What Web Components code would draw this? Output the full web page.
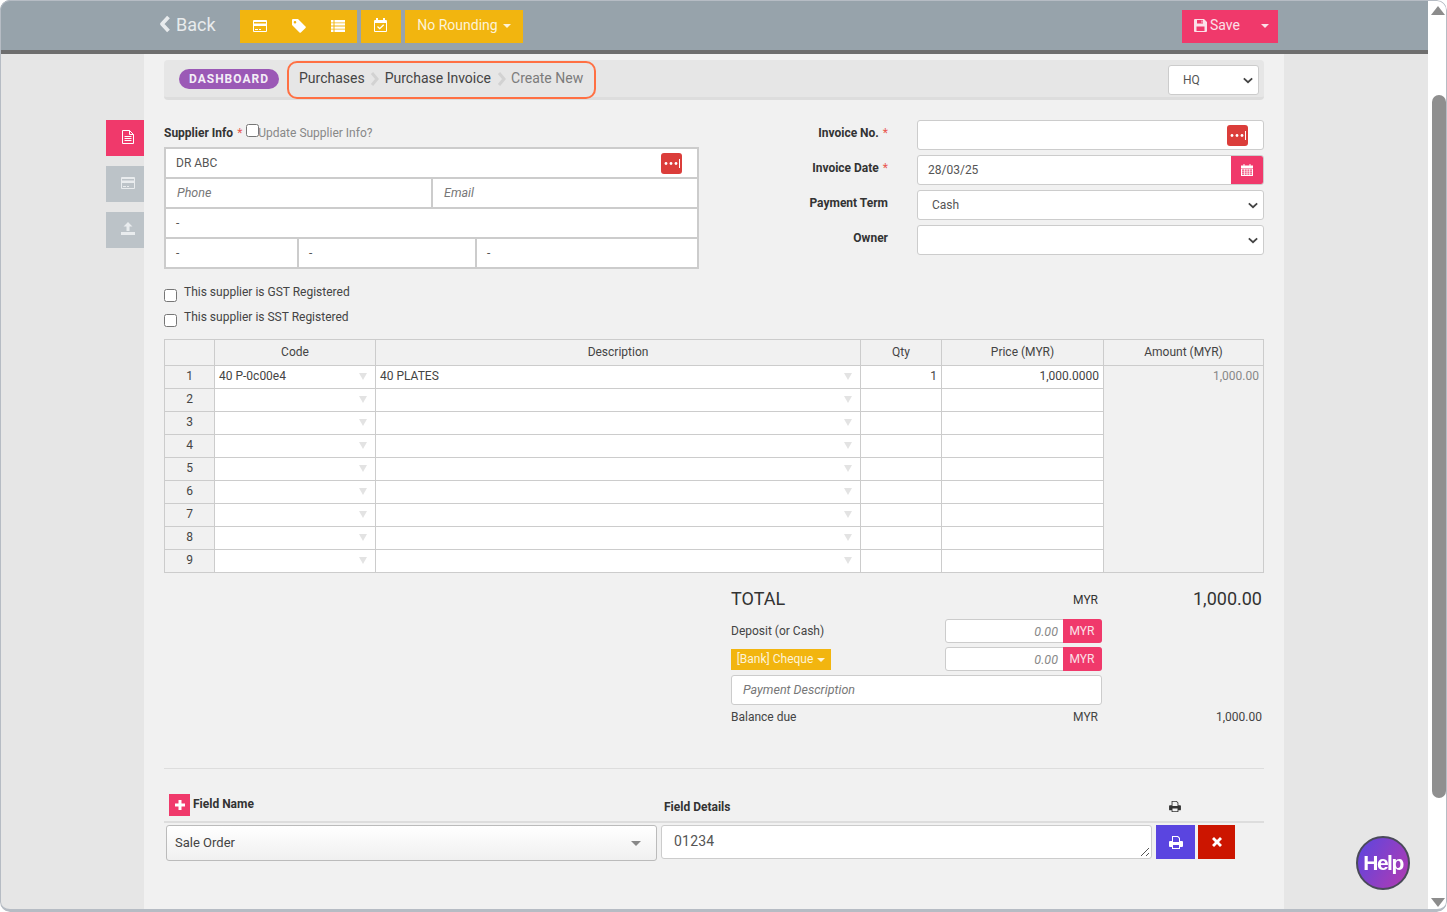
<!DOCTYPE html>
<html>
<head>
<meta charset="utf-8">
<title>Create New Purchase Invoice</title>
<style>
    html, body { margin: 0; height: 100%; background: #fff; overflow: hidden; }
    body { font: 12px/1.3 Roboto, "Liberation Sans", sans-serif; color: #333; }
</style>
</head>
<body>
<app-window>
    <app-header></app-header>
    <app-page>
        <side-tabs slot="tabs"></side-tabs>
        <bread-crumb></bread-crumb>
        <form-top></form-top>
        <line-table></line-table>
        <totals-panel></totals-panel>
        <custom-fields></custom-fields>
    </app-page>
</app-window>
<help-badge></help-badge>

<script>
const icons = {
    card: '<svg viewBox="0 0 14 12" width="16" height="12"><path fill="currentColor" fill-rule="evenodd" d="M1 0h12a1 1 0 0 1 1 1v10a1 1 0 0 1-1 1H1a1 1 0 0 1-1-1V1a1 1 0 0 1 1-1zm0 2v1.5h12V2zm0 4v5h12V6zm1 3h3v1H2zm4 0h2v1H6z"/></svg>',
    tag: '<svg viewBox="0 0 14 14" width="14" height="14"><path fill="currentColor" fill-rule="evenodd" d="M1 0h5l7.5 7.5a1 1 0 0 1 0 1.4L8.900 13.500a1 1 0 0 1-1.400 0L0 6V1a1 1 0 0 1 1-1zm2 2a1.300 1.300 0 1 0 0 2.600A1.300 1.300 0 0 0 3 2z"/></svg>',
    list: '<svg viewBox="0 0 14 12" width="14" height="12"><path fill="currentColor" d="M0 0h2.500v2.400H0zM3.500 0H14v2.400H3.500zM0 3.200h2.500v2.400H0zM3.500 3.200H14v2.400H3.500zM0 6.400h2.500v2.400H0zM3.500 6.400H14v2.400H3.500zM0 9.600h2.500V12H0zM3.500 9.600H14V12H3.500z"/></svg>',
    calcheck: '<svg viewBox="0 0 13 14" width="13" height="14"><path fill="currentColor" fill-rule="evenodd" d="M2 0h2v2h5V0h2v2h1a1 1 0 0 1 1 1v10a1 1 0 0 1-1 1H1a1 1 0 0 1-1-1V3a1 1 0 0 1 1-1h1zM1 5v8h11V5z"/><path fill="none" stroke="currentColor" stroke-width="1.300" d="M3.500 8.500l2.200 2.200 4-4"/></svg>',
    file: '<svg viewBox="0 0 12 14" width="12" height="14"><path fill="none" stroke="currentColor" d="M.5.500h7l4 4v9H.500zM7.500.500v4h4"/><path stroke="currentColor" d="M2.500 6.500h7M2.500 8.500h7M2.500 10.500h7"/></svg>',
    upload: '<svg viewBox="0 0 14 13" width="14" height="13"><path fill="currentColor" d="M7 0l4.500 4.500H8.500V9h-3V4.500H2.500zM0 10h14v3H0z"/></svg>',
    save: '<svg viewBox="0 0 13 13" width="13" height="13"><path fill="currentColor" fill-rule="evenodd" d="M1 0h9l3 3v9a1 1 0 0 1-1 1H1a1 1 0 0 1-1-1V1a1 1 0 0 1 1-1zm2 1v3.500h6V1zm4.500.5H8.500v2.300H7.500zM2.500 7.500V12h8V7.500z"/></svg>',
    cal: '<svg viewBox="0 0 12 12" width="12" height="12"><path fill="currentColor" fill-rule="evenodd" d="M2.500 0h1v1.500h5V0h1v1.500H12V4H0V1.500h2.500zM0 4.500h12V12H0zm1 1v1.300h2V5.500zm2.700 0v1.300h2V5.500zm2.700 0v1.300h2V5.500zm2.700 0v1.300H11V5.500zM1 7.500v1.300h2V7.500zm2.700 0v1.300h2V7.500zm2.700 0v1.300h2V7.500zm2.700 0v1.300H11V7.500zM1 9.500v1.300h2V9.500zm2.700 0v1.300h2V9.500zm2.700 0v1.300h2V9.500zm2.700 0v1.300H11V9.500z"/></svg>',
    print: '<svg viewBox="0 0 14 13" width="14" height="13"><path fill="currentColor" fill-rule="evenodd" d="M3 0h6l2 2v3h2a1 1 0 0 1 1 1v4a1 1 0 0 1-1 1h-2v2H3v-2H1a1 1 0 0 1-1-1V6a1 1 0 0 1 1-1h2zm1 1v5h6V2.500L8.500 1zM4 9v3h6V9z"/></svg>',
    plus: '<svg viewBox="0 0 10 10" width="10" height="10"><path fill="currentColor" d="M3.500 0h3v3.500H10v3H6.500V10h-3V6.500H0v-3h3.500z"/></svg>',
    times: '<svg viewBox="0 0 10 10" width="10" height="10"><path fill="currentColor" d="M2 0l3 3 3-3 2 2-3 3 3 3-2 2-3-3-3 3-2-2 3-3-3-3z"/></svg>',
    chevron: '<svg viewBox="0 0 12 8" width="10" height="7"><path fill="none" stroke="currentColor" stroke-width="2.200" d="M1 1.500l5 4.500 5-4.500"/></svg>',
    back: '<svg viewBox="0 0 12 18" width="12" height="18"><path fill="none" stroke="currentColor" stroke-width="3.800" stroke-linejoin="round" d="M9.500 2L3 9l6.500 7"/></svg>',
    dots: '<svg viewBox="0 0 21 21" width="21" height="21"><rect width="21" height="21" rx="3" fill="#db3d3a"/><g fill="#fff"><circle cx="5" cy="10.500" r="1.400"/><circle cx="10" cy="10.500" r="1.400"/><circle cx="15" cy="10.500" r="1.400"/><rect x="18" y="6" width="1" height="9"/></g></svg>'
};

class AppWindow extends HTMLElement {
    constructor() {
        super();
        this.attachShadow({ mode: 'open' });
        this.shadowRoot.innerHTML = `
            <style>
                :host { display: flex; width: 1447px; height: 912px; position: relative; overflow: hidden; border-radius: 10px; }
                :host::after { content: ''; position: absolute; inset: 0; border: 1px solid #b6bcc4; border-bottom-width: 3px; border-radius: 10px; pointer-events: none; }
                .body { width: 1428px; display: flex; flex-direction: column; }
                .bar { width: 19px; background: #fff; position: relative; display: flex; flex-direction: column; align-items: center; }
                .up, .down { width: 0; height: 0; border-left: 7px solid transparent; border-right: 7px solid transparent; margin-left: 1px; }
                .up { border-bottom: 9px solid #8c8c8c; margin-top: 6px; }
                .down { border-top: 9px solid #8c8c8c; margin-bottom: 5px; }
                .thumb { width: 14px; height: 703px; margin: 80px 0 100px 2px; background: #8f8f8f; border-radius: 7px; }
            </style>
            <div class="body"><slot></slot></div>
            <div class="bar"><div class="up"></div><div class="thumb"></div><div class="down"></div></div>
        `;
    }
}

class AppHeader extends HTMLElement {
    constructor() {
        super();
        this.attachShadow({ mode: 'open' });
        this.shadowRoot.innerHTML = `
            <style>
                :host { display: flex; align-items: flex-start; height: 50px; flex: none; padding-left: 160px; background: #97a3ab; border-bottom: 4px solid #6e6e6e; color: #fff; }
                .back { display: flex; align-items: center; gap: 5px; width: 80px; height: 50px; box-sizing: border-box; padding-bottom: 1px; font-size: 18px; color: #e8ebed; }
                .back svg { margin: -2px 0 0 -1px; }
                .btn { display: flex; align-items: center; height: 33px; margin-top: 10px; background: #f2b50f; color: #fff; font-size: 14px; }
                .group { width: 117px; }
                .btn .ic { width: 39px; display: flex; justify-content: center; }
                .btn .ic svg { margin-top: -2px; }
                .one { margin-left: 4px; width: 40px; justify-content: center; }
                .one svg { margin: -3px 1px 0 0; }
                .round { margin-left: 4px; width: 118px; justify-content: center; gap: 5px; color: #fdf3d7; padding-bottom: 2px; box-sizing: border-box; }
                .caret { width: 0; height: 0; border-left: 4px solid transparent; border-right: 4px solid transparent; border-top: 4px solid currentColor; }
                .save { margin-left: auto; margin-right: 150px; width: 96px; background: #f0396b; justify-content: space-between; padding: 0 9px 2px 12px; box-sizing: border-box; color: #fbe0e8; }
                .save span { display: flex; align-items: center; gap: 3px; }
            </style>
            <div class="back">${icons.back}<span>Back</span></div>
            <div class="btn group"><span class="ic">${icons.card}</span><span class="ic">${icons.tag}</span><span class="ic">${icons.list}</span></div>
            <div class="btn one">${icons.calcheck}</div>
            <div class="btn round">No Rounding <i class="caret"></i></div>
            <div class="btn save"><span>${icons.save} Save</span><i class="caret"></i></div>
        `;
    }
}

class AppPage extends HTMLElement {
    constructor() {
        super();
        this.attachShadow({ mode: 'open' });
        this.shadowRoot.innerHTML = `
            <style>
                :host { display: grid; grid-template-columns: 144px 1140px 1fr; flex: 1; background: #e6e6e6; min-height: 0; }
                .main { background: #f1f1f1; padding: 6px 20px 0; position: relative; min-width: 0; }
            </style>
            <slot name="tabs"></slot>
            <div class="main"><slot></slot></div>
        `;
    }
}

class SideTabs extends HTMLElement {
    constructor() {
        super();
        this.attachShadow({ mode: 'open' });
        this.shadowRoot.innerHTML = `
            <style>
                :host { display: flex; flex-direction: column; align-items: flex-end; gap: 10px; padding-top: 66px; }
                div { width: 38px; height: 36px; box-sizing: border-box; padding: 0 0 3px 6px; display: flex; align-items: center; justify-content: center; background: #bcc3c8; color: #e9ecee; }
                .on { background: #f0396b; color: #fff; }
            </style>
            <div class="on">${icons.file}</div>
            <div>${icons.card}</div>
            <div>${icons.upload}</div>
        `;
    }
}

class BreadCrumb extends HTMLElement {
    constructor() {
        super();
        this.attachShadow({ mode: 'open' });
        const sep = '<svg class="sep" viewBox="0 0 8 14" width="9" height="14"><path fill="none" stroke="#d2d2d2" stroke-width="3" d="M1.500 1l5 6-5 6"/></svg>';
        this.shadowRoot.innerHTML = `
            <style>
                :host { display: flex; align-items: center; height: 37px; padding: 0 5px 0 15px; background: #e6e6e6; border-bottom: 3px solid #ddd; border-radius: 4px; position: relative; }
                .pill { width: 100px; height: 20px; line-height: 20px; text-align: center; border-radius: 10px; background: #9b59b6; color: #f4eef7; font-weight: 700; font-size: 12px; letter-spacing: 1px; margin-right: 20px; }
                .crumbs { display: flex; align-items: center; gap: 5.500px; font-size: 14px; color: #444; }
                .last { color: #7b7b7b; }
                .mark { position: absolute; left: 123px; top: 1px; width: 305px; height: 34px; border: 2px solid #ff7043; border-radius: 10px; }
                .hq { margin-left: auto; width: 91px; height: 30px; margin-top: 3px; box-sizing: border-box; display: flex; align-items: center; justify-content: space-between; padding: 1px 5px 0 14px; background: #fff; border: 1px solid #ccc; border-radius: 3px; color: #555; }
                .hq svg { color: #444; }
            </style>
            <div class="pill">DASHBOARD</div>
            <div class="crumbs"><span>Purchases</span>${sep}<span>Purchase Invoice</span>${sep}<span class="last">Create New</span></div>
            <div class="mark"></div>
            <div class="hq">HQ ${icons.chevron}</div>
        `;
    }
}

class FormTop extends HTMLElement {
    constructor() {
        super();
        this.attachShadow({ mode: 'open' });
        this.shadowRoot.innerHTML = `
            <style>
                :host { display: block; margin-top: 20px; }
                .cols { display: flex; justify-content: space-between; }
                .left { width: 535px; }
                .head { height: 27px; display: flex; align-items: center; font-weight: 700; color: #333; padding-top: 1px; box-sizing: border-box; }
                .head b, label b { color: #e9584f; font-weight: 400; margin-left: 4px; }
                .head input { margin: -7px -1px 0 4px; }
                .head span { font-weight: 400; color: #888; }
                .box { display: grid; gap: 2px; padding: 2px; background: #ccc; }
                .row { display: grid; gap: 2px; }
                .cell { height: 28px; box-sizing: border-box; padding: 1px 15px 0 10px; background: #fff; display: flex; align-items: center; justify-content: space-between; color: #555; }
                .cell svg { margin-top: -1px; }
                .ph { font-style: italic; font-size: 12.5px; color: #777; padding-left: 11px; }
                .right { display: grid; grid-template-columns: 97px 347px; column-gap: 29px; row-gap: 5px; align-content: start; }
                label { height: 30px; display: flex; justify-content: flex-end; align-items: center; box-sizing: border-box; font-weight: 700; white-space: nowrap; margin-top: -2px; margin-bottom: 2px; padding-top: 1px; }
                .field { height: 30px; box-sizing: border-box; display: flex; align-items: center; justify-content: space-between; padding: 1px 5px 0 10px; background: #fff; border: 1px solid #ccc; border-radius: 3px; color: #555; }
                .field.sel { padding-left: 14px; }
                .field.sel svg { color: #444; margin-left: auto; }
                .field.dots { padding: 0 15px 0 10px; justify-content: flex-end; }
                .date { padding-right: 0; overflow: hidden; }
                .date i { width: 33px; height: 30px; margin: -2px -1px -1px 0; padding-right: 2px; box-sizing: border-box; display: flex; align-items: center; justify-content: center; background: #f0396b; color: #fff; }
                .checks { margin-top: 15px; }
                .checks div { height: 25px; display: flex; gap: 7px; color: #444; }
                .checks input { margin: -2px 0 0; }
                .checks span { margin-top: 1px; }
            </style>
            <div class="cols">
                <div class="left">
                    <div class="head">Supplier Info <b>*</b><input type="checkbox"><span>Update Supplier Info?</span></div>
                    <div class="box">
                        <div class="cell">DR ABC ${icons.dots}</div>
                        <div class="row" style="grid-template-columns: 265px 1fr"><div class="cell ph">Phone</div><div class="cell ph">Email</div></div>
                        <div class="cell">-</div>
                        <div class="row" style="grid-template-columns: 131px 176px 1fr"><div class="cell">-</div><div class="cell">-</div><div class="cell">-</div></div>
                    </div>
                </div>
                <div class="right">
                    <label>Invoice No. <b>*</b></label><div class="field dots">${icons.dots}</div>
                    <label>Invoice Date <b>*</b></label><div class="field date">28/03/25<i>${icons.cal}</i></div>
                    <label>Payment Term</label><div class="field sel">Cash ${icons.chevron}</div>
                    <label>Owner</label><div class="field sel">${icons.chevron}</div>
                </div>
            </div>
            <div class="checks">
                <div><input type="checkbox"><span>This supplier is GST Registered</span></div>
                <div><input type="checkbox"><span>This supplier is SST Registered</span></div>
            </div>
        `;
    }
}

class LineTable extends HTMLElement {
    constructor() {
        super();
        this.attachShadow({ mode: 'open' });
        const tri = '<i class="tri"></i>';
        let rows = '';
        for (let n = 1; n <= 9; n++) {
            const first = n === 1;
            rows += `<tr>
                <td class="num">${n}</td>
                <td class="dd">${first ? '40 P-0c00e4' : ''}${tri}</td>
                <td class="dd">${first ? '40 PLATES' : ''}${tri}</td>
                <td class="r">${first ? '1' : ''}</td>
                <td class="r">${first ? '1,000.0000' : ''}</td>
                ${first ? '<td class="amt" rowspan="9">1,000.00</td>' : ''}
            </tr>`;
        }
        this.shadowRoot.innerHTML = `
            <style>
                :host { display: block; margin-top: 5px; }
                table { width: 1100px; table-layout: fixed; border-collapse: collapse; color: #444; }
                th, td { border: 1px solid #ccc; padding: 0 4px; height: 22px; box-sizing: border-box; }
                th { height: 26px; font-weight: 400; background: #f1f1f1; }
                td { background: #fff; height: 23px; position: relative; white-space: nowrap; }
                .num { background: #f1f1f1; text-align: center; }
                .r { text-align: right; }
                .amt { background: #f1f1f1; text-align: right; vertical-align: top; color: #888; padding-top: 3px; }
                .tri { position: absolute; right: 8px; top: 7px; width: 0; height: 0; border-left: 4px solid transparent; border-right: 4px solid transparent; border-top: 7px solid #e3e3e3; }
            </style>
            <table>
                <colgroup><col style="width:50px"><col style="width:161px"><col style="width:485px"><col style="width:81px"><col style="width:162px"><col style="width:160px"></colgroup>
                <tr><th></th><th>Code</th><th>Description</th><th>Qty</th><th>Price (MYR)</th><th>Amount (MYR)</th></tr>
                ${rows}
            </table>
        `;
    }
}

class TotalsPanel extends HTMLElement {
    constructor() {
        super();
        this.attachShadow({ mode: 'open' });
        const money = '<div class="money"><span>0.00</span><i>MYR</i></div>';
        this.shadowRoot.innerHTML = `
            <style>
                :host { display: block; margin: 14px 2px 0 567px; color: #444; }
                .sum { display: grid; grid-template-columns: 1fr auto 164px; align-items: center; }
                .sum > :last-child { text-align: right; }
                .total { height: 24px; font-size: 18px; color: #333; }
                .total small { font-size: 12px; padding-top: 3px; }
                .pay { display: flex; align-items: center; height: 24px; margin-top: 4px; width: 371px; }
                .pay.first { margin-top: 8px; }
                .pay .lbl { width: 214px; flex: none; padding-top: 1px; }
                .money { width: 157px; height: 24px; display: flex; box-sizing: border-box; background: #fff; border: 1px solid #ccc; border-radius: 3px; }
                .money span { flex: 1; text-align: right; line-height: 23px; padding-right: 5px; font-size: 12.5px; font-style: italic; color: #888; }
                .money i { width: 39px; height: 24px; margin: -1px -1px 0 0; padding-right: 1px; box-sizing: border-box; line-height: 24px; text-align: center; font-style: normal; background: #f0396b; color: #fbe0e8; border-radius: 0 3px 3px 0; }
                .bank { width: 100px; height: 21px; margin-right: 114px; flex: none; display: flex; align-items: center; justify-content: center; gap: 4px; padding-top: 1px; box-sizing: border-box; background: #f2b50f; color: #fdf3d7; }
                .caret { width: 0; height: 0; border-left: 4px solid transparent; border-right: 4px solid transparent; border-top: 4px solid currentColor; margin-top: 1px; }
                .desc { width: 371px; height: 30px; margin-top: 4px; box-sizing: border-box; padding: 0 11px; display: flex; align-items: center; background: #fff; border: 1px solid #ccc; border-radius: 3px; font-style: italic; font-size: 12.5px; color: #777; }
                .due { height: 18px; margin-top: 4px; }
                hr { border: 0; height: 1px; background: #ddd; margin: 41px -2px 0 -567px; }
            </style>
            <div class="sum total"><span>TOTAL</span><small>MYR</small><span>1,000.00</span></div>
            <div class="pay first"><span class="lbl">Deposit (or Cash)</span>${money}</div>
            <div class="pay"><span class="bank">[Bank] Cheque <i class="caret"></i></span>${money}</div>
            <div class="desc">Payment Description</div>
            <div class="sum due"><span>Balance due</span><span>MYR</span><span>1,000.00</span></div>
            <hr>
        `;
    }
}

class CustomFields extends HTMLElement {
    constructor() {
        super();
        this.attachShadow({ mode: 'open' });
        this.shadowRoot.innerHTML = `
            <style>
                :host { display: block; padding-top: 25px; }
                .head { display: grid; grid-template-columns: 500px 505px 1fr; height: 27px; border-bottom: 2px solid #ddd; font-weight: 700; color: #333; }
                .name { display: flex; gap: 3px; padding-left: 5px; }
                .add { width: 21px; height: 22px; display: flex; align-items: center; justify-content: center; background: #f0396b; color: #fff; }
                .name span { margin-top: 3px; }
                .det { padding-top: 6px; }
                .pr { padding-top: 7px; color: #333; }
                .row { display: flex; align-items: flex-start; padding: 2px 0 0 2px; }
                .so { width: 491px; height: 36px; box-sizing: border-box; display: flex; align-items: center; justify-content: space-between; padding: 0 15px 0 8px; border: 1px solid #bbb; border-radius: 3px; background: linear-gradient(#fff, #f0f0f0); font-size: 13px; color: #444; }
                .so i { width: 0; height: 0; border-left: 5px solid transparent; border-right: 5px solid transparent; border-top: 5px solid #888; }
                .txt { width: 491px; height: 34px; box-sizing: border-box; margin-left: 4px; padding: 0 12px 2px; display: flex; align-items: center; justify-content: space-between; position: relative; background: #fff; border: 1px solid #ccc; border-radius: 3px; font-size: 14px; letter-spacing: .2px; color: #555; }
                .txt svg { position: absolute; right: 1px; bottom: 1px; }
                .act { width: 39px; height: 34px; margin-left: 4px; display: flex; align-items: center; justify-content: center; background: #5a45e0; color: #fff; }
                .del { width: 37px; margin-left: 3px; background: #cc1500; }
            </style>
            <div class="head">
                <div class="name"><div class="add">${icons.plus}</div><span>Field Name</span></div>
                <div class="det">Field Details</div>
                <div class="pr"><svg viewBox="0 0 14 13" width="12" height="11">${icons.print.replace(/^<svg[^>]*>|<\/svg>$/g, '')}</svg></div>
            </div>
            <div class="row">
                <div class="so">Sale Order <i></i></div>
                <div class="txt">01234<svg viewBox="0 0 10 10" width="10" height="10"><path fill="none" stroke="#555" d="M1 9l8-8M6 9l3-3"/></svg></div>
                <div class="act">${icons.print}</div>
                <div class="act del">${icons.times}</div>
            </div>
        `;
    }
}

class HelpBadge extends HTMLElement {
    constructor() {
        super();
        this.attachShadow({ mode: 'open' });
        this.shadowRoot.innerHTML = `
            <style>
                :host { position: fixed; left: 1356px; top: 836px; width: 54px; height: 54px; box-sizing: border-box; display: flex; align-items: center; justify-content: center; border-radius: 50%; border: 2px solid #4a4a5a; background: linear-gradient(120deg, #5b46e0, #b43ab0); color: #fff; font: 700 21px "Liberation Sans", sans-serif; letter-spacing: -1.500px; }
            </style>
            Help
        `;
    }
}

customElements.define('app-window', AppWindow);
customElements.define('app-header', AppHeader);
customElements.define('app-page', AppPage);
customElements.define('side-tabs', SideTabs);
customElements.define('bread-crumb', BreadCrumb);
customElements.define('form-top', FormTop);
customElements.define('line-table', LineTable);
customElements.define('totals-panel', TotalsPanel);
customElements.define('custom-fields', CustomFields);
customElements.define('help-badge', HelpBadge);
</script>
</body>
</html>
